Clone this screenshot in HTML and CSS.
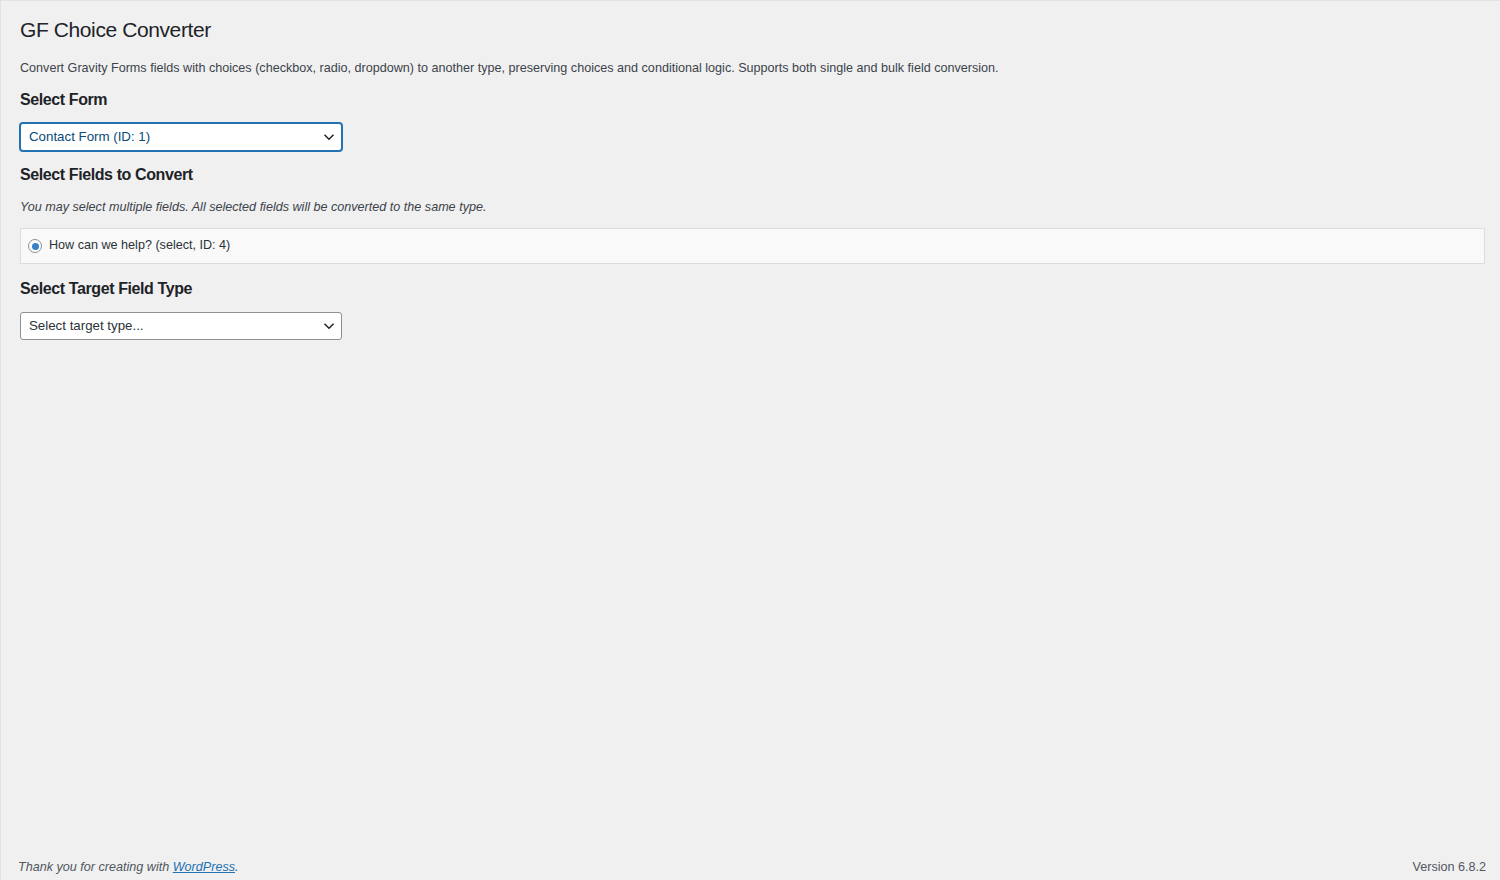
FILE: index.html
```html
<!DOCTYPE html>
<html lang="en">
<head>
    <meta charset="UTF-8">
    <meta name="viewport" content="width=device-width, initial-scale=1.0">
    <title>GF Choice Converter</title>
    <link rel="stylesheet" href="styles.css">
</head>
<body>
    <div class="wrap">
        <h1>GF Choice Converter</h1>

        <p class="intro">
            Convert Gravity Forms fields with choices (checkbox, radio, dropdown) to another type, preserving choices and conditional logic. Supports both single and bulk field conversion.
        </p>

        <h2>Select Form</h2>
        <div class="select-wrap">
            <select class="select focused">
                <option>Contact Form (ID: 1)</option>
            </select>
            <svg class="chevron" width="12" height="8" viewBox="0 0 12 8"><path d="M1.5 1.8 L6 6.2 L10.5 1.8" fill="none" stroke="#1d2327" stroke-width="1.5"/></svg>
        </div>

        <h2>Select Fields to Convert</h2>
        <p class="hint">You may select multiple fields. All selected fields will be converted to the same type.</p>

        <div class="field-list">
            <label class="field-item">
                <input type="radio" name="field" checked>
                <span>How can we help? (select, ID: 4)</span>
            </label>
        </div>

        <h2>Select Target Field Type</h2>
        <div class="select-wrap">
            <select class="select">
                <option>Select target type...</option>
            </select>
            <svg class="chevron" width="12" height="8" viewBox="0 0 12 8"><path d="M1.5 1.8 L6 6.2 L10.5 1.8" fill="none" stroke="#1d2327" stroke-width="1.5"/></svg>
        </div>
    </div>

    <div class="footer">
        <p class="footer-left">Thank you for creating with <a href="#">WordPress</a>.</p>
        <p class="footer-right">Version 6.8.2</p>
    </div>
</body>
</html>
```

FILE: styles.css
```css
* {
    box-sizing: border-box;
}

html, body {
    margin: 0;
    padding: 0;
    height: 100%;
}

body {
    background: #f0f0f1;
    color: #3c434a;
    font-family: "Liberation Sans", Arial, sans-serif;
    font-size: 12.6px;
    line-height: 1.4;
    display: flex;
    flex-direction: column;
    border-top: 1px solid #e2e2e3;
    border-left: 1px solid #e2e2e3;
}

.wrap {
    flex: 1;
    padding: 6px 15px 0 19px;
}

h1 {
    color: #1d2327;
    font-size: 21px;
    font-weight: 400;
    letter-spacing: -0.4px;
    line-height: 1.3;
    margin: 0;
    padding: 9px 0 4px;
}

h2 {
    color: #1d2327;
    font-size: 16px;
    font-weight: 600;
    letter-spacing: -0.4px;
    line-height: 1.3;
    margin: 0;
}

.intro {
    margin: 12px 0 12px;
    line-height: 1.5;
}

.select-wrap {
    position: relative;
    width: 322px;
    margin: 12px 0 14px;
}

.select {
    -webkit-appearance: none;
    appearance: none;
    width: 100%;
    height: 28px;
    background: #fff;
    border: 1px solid #8c8f94;
    border-radius: 3px;
    color: #2c3338;
    font-family: inherit;
    font-size: 13.3px;
    padding: 0 24px 0 8px;
    outline: none;
}

.select.focused {
    border-color: #2271b1;
    box-shadow: 0 0 0 1px #2271b1;
    color: #0a4b78;
}

.chevron {
    position: absolute;
    right: 7px;
    top: 10px;
    pointer-events: none;
}

.hint {
    font-style: italic;
    margin: 13px 0 12px;
}

.field-list {
    background: #f9f9f9;
    border: 1px solid #dcdcde;
    padding: 8px 10px 8px 7px;
    margin-bottom: 15px;
}

.field-item {
    display: flex;
    align-items: center;
    gap: 7px;
    color: #2c3338;
}

.field-item input {
    -webkit-appearance: none;
    appearance: none;
    width: 14px;
    height: 14px;
    margin: 0;
    border: 1px solid #8c8f94;
    border-radius: 50%;
    background: #fff;
    display: inline-flex;
    align-items: center;
    justify-content: center;
}

.field-item input:checked::before {
    content: "";
    width: 7px;
    height: 7px;
    border-radius: 50%;
    background: #3582c4;
}

.footer {
    display: flex;
    justify-content: space-between;
    padding: 0 14px 3px 17px;
    color: #50575e;
}

.footer p {
    margin: 0;
}

.footer-left {
    font-style: italic;
}

.footer-left a {
    color: #2271b1;
}
```
